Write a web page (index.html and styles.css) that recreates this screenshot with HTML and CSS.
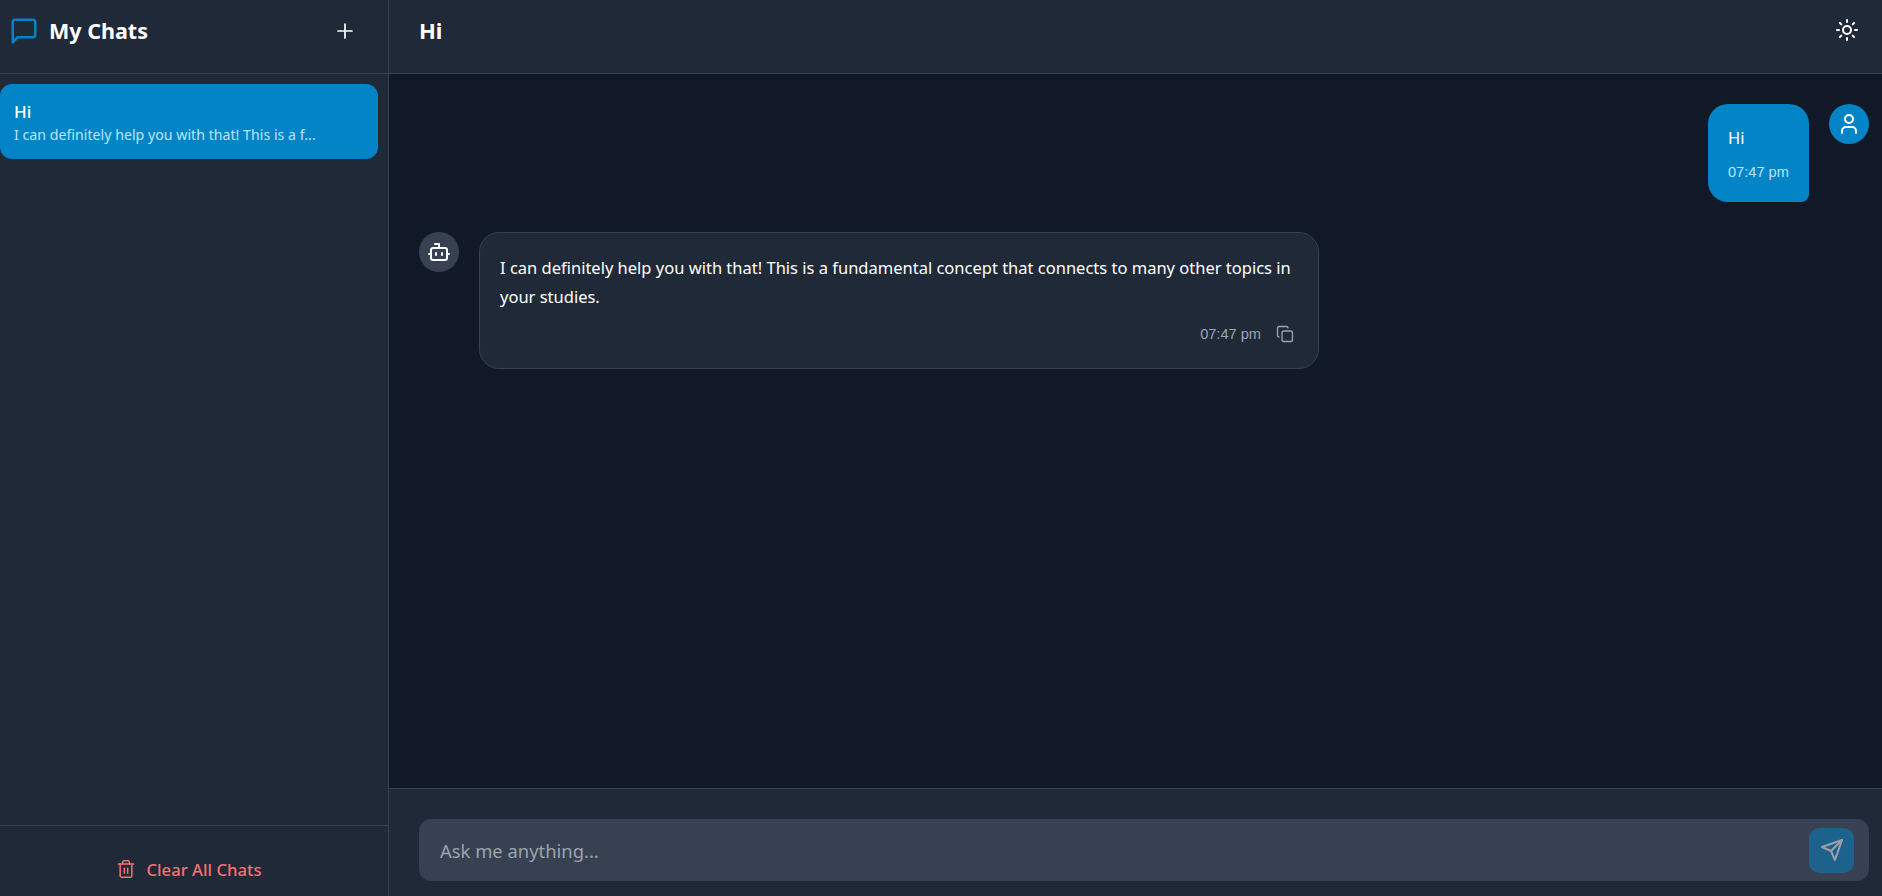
FILE: index.html
```html
<!DOCTYPE html>
<html lang="en">
<head>
  <meta charset="UTF-8" />
  <meta name="viewport" content="width=device-width, initial-scale=1.0"/>
  <title>My Chats</title>
  <link rel="stylesheet" href="styles.css">
</head>
<body>
  <aside class="sidebar">
    <div class="side-head">
      <div class="brand">
        <svg class="icon brand-icon" viewBox="0 0 24 24"><path d="M21 15a2 2 0 0 1-2 2H7l-4 4V5a2 2 0 0 1 2-2h14a2 2 0 0 1 2 2z"/></svg>
        <h2>My Chats</h2>
      </div>
      <button class="icon-btn new-chat">
        <svg class="icon" viewBox="0 0 24 24"><path d="M5 12h14"/><path d="M12 5v14"/></svg>
      </button>
    </div>

    <div class="chat-list">
      <div class="chat-item">
        <div class="chat-title">Hi</div>
        <div class="chat-preview">I can definitely help you with that! This is a f...</div>
      </div>
    </div>

    <div class="side-foot">
      <button class="clear-btn">
        <svg class="icon" viewBox="0 0 24 24"><path d="M3 6h18"/><path d="M19 6v14c0 1-1 2-2 2H7c-1 0-2-1-2-2V6"/><path d="M8 6V4c0-1 1-2 2-2h4c1 0 2 1 2 2v2"/><path d="M10 11v6"/><path d="M14 11v6"/></svg>
        Clear All Chats
      </button>
    </div>
  </aside>

  <main class="chat">
    <header class="chat-head">
      <h1>Hi</h1>
      <button class="icon-btn theme">
        <svg class="icon" viewBox="0 0 24 24"><circle cx="12" cy="12" r="4"/><path d="M12 2v2"/><path d="M12 20v2"/><path d="m4.93 4.93 1.41 1.41"/><path d="m17.66 17.66 1.41 1.41"/><path d="M2 12h2"/><path d="M20 12h2"/><path d="m6.34 17.66-1.41 1.41"/><path d="m19.07 4.93-1.41 1.41"/></svg>
      </button>
    </header>

    <section class="messages">
      <div class="msg msg-user">
        <div class="bubble bubble-user">
          <p>Hi</p>
          <div class="time">07:47 pm</div>
        </div>
        <div class="avatar avatar-user">
          <svg class="icon" viewBox="0 0 24 24"><path d="M19 21v-2a4 4 0 0 0-4-4H9a4 4 0 0 0-4 4v2"/><circle cx="12" cy="7" r="4"/></svg>
        </div>
      </div>

      <div class="msg">
        <div class="avatar avatar-bot">
          <svg class="icon" viewBox="0 0 24 24"><path d="M12 8V4H8"/><rect width="16" height="12" x="4" y="8" rx="2"/><path d="M2 14h2"/><path d="M20 14h2"/><path d="M15 13v2"/><path d="M9 13v2"/></svg>
        </div>
        <div class="bubble bubble-bot">
          <p>I can definitely help you with that! This is a fundamental concept that connects to many other topics in your studies.</p>
          <div class="bubble-meta">
            <span class="time">07:47 pm</span>
            <svg class="icon copy" viewBox="0 0 24 24"><rect width="14" height="14" x="8" y="8" rx="2"/><path d="M4 16c-1.1 0-2-.9-2-2V4c0-1.1.9-2 2-2h10c1.1 0 2 .9 2 2"/></svg>
          </div>
        </div>
      </div>
    </section>

    <footer class="composer">
      <div class="input-wrap">
        <input type="text" placeholder="Ask me anything..." />
        <button class="send">
          <svg class="icon" viewBox="0 0 24 24"><path d="m22 2-7 20-4-9-9-4Z"/><path d="M22 2 11 13"/></svg>
        </button>
      </div>
    </footer>
  </main>
</body>
</html>
```

FILE: styles.css
```css
* {
  box-sizing: border-box;
}

body {
  margin: 0;
  height: 100vh;
  display: flex;
  overflow: hidden;
  background: #111827;
  color: #fff;
  font-family: "Noto Sans", "Open Sans", sans-serif;
}

button {
  border: none;
  background: none;
  color: inherit;
  font: inherit;
  cursor: pointer;
  padding: 0;
}

.icon {
  fill: none;
  stroke: currentColor;
  stroke-width: 2;
  stroke-linecap: round;
  stroke-linejoin: round;
  display: block;
}

.icon-btn {
  display: flex;
}

/* sidebar */
.sidebar {
  width: 389px;
  flex-shrink: 0;
  display: flex;
  flex-direction: column;
  background: #1f2937;
  border-right: 1px solid #374151;
}

.side-head {
  height: 74px;
  display: flex;
  align-items: center;
  justify-content: space-between;
  padding: 0 31px 12px 9px;
  border-bottom: 1px solid #374151;
}

.brand {
  display: flex;
  align-items: center;
  gap: 10px;
}

.brand-icon {
  width: 30px;
  height: 30px;
  color: #0284c7;
}

.brand h2 {
  margin: 0;
  font-size: 21.5px;
  font-weight: 700;
  line-height: 30px;
}

.new-chat .icon {
  width: 24px;
  height: 24px;
  stroke-width: 1.7;
}

.chat-list {
  flex: 1;
  padding: 10px 10px 0 0;
}

.chat-item {
  height: 75px;
  padding: 16px 14px;
  background: #0284c7;
  border-radius: 12px;
}

.chat-title {
  font-size: 17px;
  font-weight: 500;
  line-height: 24px;
}

.chat-preview {
  margin-top: 1px;
  font-size: 14.2px;
  line-height: 19px;
  color: #bae6fd;
  white-space: nowrap;
}

.side-foot {
  height: 71px;
  border-top: 1px solid #374151;
  display: flex;
  justify-content: center;
  padding: 31px 10px 0 0;
}

.clear-btn {
  display: flex;
  align-items: center;
  gap: 10px;
  height: 24px;
  font-size: 16.7px;
  font-weight: 500;
  color: #f87171;
}

.clear-btn .icon {
  width: 20px;
  height: 20px;
  stroke-width: 1.8;
}

/* chat */
.chat {
  flex: 1;
  min-width: 0;
  display: flex;
  flex-direction: column;
}

.chat-head {
  height: 74px;
  display: flex;
  align-items: center;
  justify-content: space-between;
  padding: 0 23px 13px 30px;
  background: #1f2937;
  border-bottom: 1px solid #374151;
}

.chat-head h1 {
  margin: 0;
  font-size: 22px;
  font-weight: 700;
}

.theme .icon {
  width: 24px;
  height: 24px;
}

.messages {
  flex: 1;
  padding: 30px 13px 0 30px;
  display: flex;
  flex-direction: column;
  gap: 30px;
}

.msg {
  display: flex;
  align-items: flex-start;
  gap: 20px;
}

.msg-user {
  justify-content: flex-end;
}

.avatar {
  width: 40px;
  height: 40px;
  flex-shrink: 0;
  border-radius: 50%;
  display: flex;
  align-items: center;
  justify-content: center;
}

.avatar .icon {
  width: 24px;
  height: 24px;
}

.avatar-user {
  background: #0284c7;
}

.avatar-bot {
  background: #374151;
}

.bubble p {
  margin: 0;
  font-size: 16.5px;
  line-height: 29px;
}

.bubble-user {
  width: 101px;
  height: 98px;
  padding: 22px 20px 0;
  background: #0284c7;
  border-radius: 20px 20px 8px 20px;
}

.bubble-user p {
  line-height: 24px;
}

.bubble-user .time {
  margin-top: 12px;
  color: #bae6fd;
}

.bubble-bot {
  width: 840px;
  height: 137px;
  padding: 20px 20px 0;
  background: #1f2937;
  border: 1px solid #374151;
  border-radius: 20px;
}

.time {
  font-family: "Liberation Sans", Arial, sans-serif;
  font-size: 14.6px;
  line-height: 20px;
  color: #9ca3af;
  white-space: nowrap;
}

.bubble-meta {
  display: flex;
  justify-content: flex-end;
  align-items: center;
  gap: 15px;
  margin-top: 13px;
  padding-right: 4px;
  color: #9ca3af;
}

.copy {
  width: 18px;
  height: 18px;
  stroke-width: 1.8;
}

/* composer */
.composer {
  height: 108px;
  padding: 30px 13px 0 30px;
  background: #1f2937;
  border-top: 1px solid #374151;
}

.input-wrap {
  height: 62px;
  display: flex;
  align-items: center;
  padding: 0 15px 0 21px;
  background: #374151;
  border-radius: 12px;
}

.input-wrap input {
  flex: 1;
  border: none;
  outline: none;
  background: none;
  color: #fff;
  font: inherit;
  font-size: 18.4px;
  padding: 0;
}

.input-wrap input::placeholder {
  color: #9ca3af;
  opacity: 1;
}

.send {
  width: 45px;
  height: 45px;
  display: flex;
  align-items: center;
  justify-content: center;
  background: #0284c7;
  border-radius: 10px;
  opacity: 0.5;
}

.send .icon {
  width: 24px;
  height: 24px;
}
```
